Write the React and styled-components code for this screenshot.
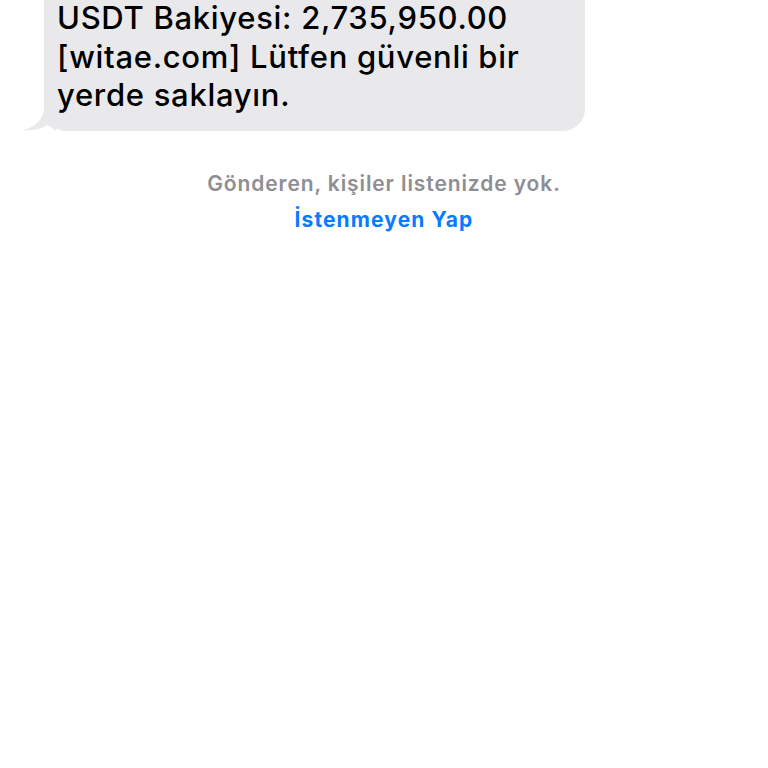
import React from 'react';
import styled, { createGlobalStyle } from 'styled-components';

const Global = createGlobalStyle`
body {
    margin: 0;
    background: #ffffff;
    font-family: Inter, "Liberation Sans", Arial, sans-serif;
    overflow: hidden;
}
`
const Page = styled.div`
width: 768px;
height: 768px;
display: flex;
flex-direction: column;
align-items: center;
overflow: hidden;
`
const Row = styled.div`
align-self: stretch;
padding-left: 44px;
display: flex;
`
const Bubble = styled.div`
position: relative;
width: 541px;
box-sizing: border-box;
margin-top: -31px;
padding: 30px 14px 16px 13px;
background: #e9e9eb;
border-radius: 22px;
color: #000;
font-size: 31px;
font-weight: 500;
line-height: 38.5px;
letter-spacing: 0.7px;
`
const Tail = styled.svg`
position: absolute;
left: -22px;
bottom: 0;
`
const Note = styled.p`
margin: 40px 0 0;
color: #8e8e93;
font-size: 21px;
font-weight: 600;
letter-spacing: 0.9px;
`
const Action = styled.button`
margin-top: 11px;
padding: 0;
border: none;
background: none;
color: #0a7aff;
font-family: inherit;
font-size: 21px;
font-weight: 700;
letter-spacing: 1.1px;
`

export default function App() {
    return <Page>
        <Global />
        <Row>
            <Bubble>
                <Tail width="34" height="24" viewBox="0 0 34 24">
                    <path d="M22 0 C22 12 14 20 0 23.5 C10 24 18 22 26 18 L34 24 L34 0 Z" fill="#e9e9eb" />
                </Tail>
                USDT Bakiyesi: 2,735,950.00<br />
                [witae.com] Lütfen güvenli bir<br />
                yerde saklayın.
            </Bubble>
        </Row>
        <Note>Gönderen, kişiler listenizde yok.</Note>
        <Action>İstenmeyen Yap</Action>
    </Page>
}
